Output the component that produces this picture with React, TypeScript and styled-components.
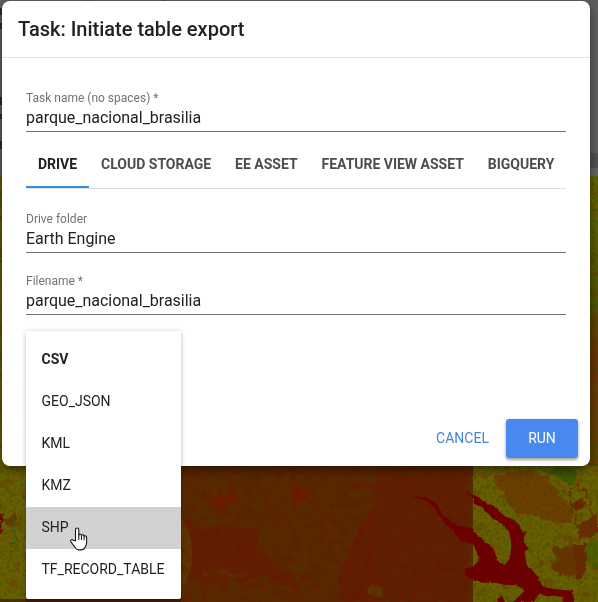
import React from "react";
import styled, { createGlobalStyle } from "styled-components";

const GlobalStyle = createGlobalStyle`
  *, *::before, *::after { box-sizing: border-box; }
  body { margin: 0; background: #5f5f5f; }
  body, button, input { font-family: Roboto, "Liberation Sans", sans-serif; }
`;

const Page = styled.main`
  position: relative;
  width: 598px;
  height: 602px;
  padding: 1px 8px 0 2px;
  overflow: hidden;
`;

const MapCanvas = styled.svg`
  position: absolute;
  inset: 0;
`;

const Dialog = styled.section`
  position: relative;
  display: flex;
  flex-direction: column;
  height: 465px;
  background: #fff;
  border-radius: 8px;
  box-shadow: 0 4px 10px rgba(0, 0, 0, 0.5);
  color: #212121;
`;

const Header = styled.header`
  height: 57px;
  padding: 0 16px;
  border-bottom: 1px solid #e0e0e0;
`;

const Title = styled.h1`
  margin: 0;
  font-size: 20px;
  font-weight: 500;
  line-height: 56px;
`;

const Content = styled.div`
  flex: 1;
  padding: 32px 24px 0;
`;

const Field = styled.label<{ $flush?: boolean }>`
  display: block;
  height: 42px;
  margin-bottom: ${(p) => (p.$flush ? "0" : "20px")};
  border-bottom: 1px solid #737373;
`;

const FieldLabel = styled.span`
  display: block;
  height: 16px;
  font-size: 12px;
  line-height: 16px;
  color: #737373;
`;

const FieldInput = styled.input`
  display: block;
  width: 100%;
  height: 24px;
  padding: 0;
  border: 0;
  outline: 0;
  background: transparent;
  font-size: 16px;
  line-height: 24px;
  letter-spacing: -0.02px;
  color: #212121;
`;

const Tabs = styled.nav`
  display: flex;
  height: 48px;
  margin: 9px 0 22px;
  border-bottom: 1px solid #dedede;
`;

const Tab = styled.button<{ $active?: boolean }>`
  position: relative;
  height: 48px;
  padding: 0 12px 1px;
  border: 0;
  background: none;
  font-size: 14px;
  font-weight: 700;
  line-height: 47px;
  letter-spacing: -0.015px;
  white-space: nowrap;
  color: ${(p) => (p.$active ? "#212121" : "#4d4d4d")};

  &::after {
    content: "";
    position: absolute;
    left: 0;
    right: 0;
    bottom: 1px;
    height: 2px;
    background: ${(p) => (p.$active ? "#3090e0" : "transparent")};
  }
`;

const Actions = styled.footer`
  display: flex;
  justify-content: flex-end;
  gap: 5px;
  padding: 0 12px 8px;
`;

const Button = styled.button<{ $primary?: boolean }>`
  height: 39px;
  width: ${(p) => (p.$primary ? "72px" : "77px")};
  padding: 0 0 1px;
  border: 0;
  border-radius: 3px;
  background: ${(p) => (p.$primary ? "#4889f0" : "transparent")};
  color: ${(p) => (p.$primary ? "#fff" : "#4384dc")};
  box-shadow: ${(p) => (p.$primary ? "0 2px 3px rgba(0,0,0,.32), 0 1px 4px rgba(0,0,0,.12)" : "none")};
  font-size: 14px;
  font-weight: 400;
`;

const Menu = styled.ul`
  position: absolute;
  left: 26px;
  top: 331px;
  width: 155px;
  margin: 0;
  padding: 8px 0;
  list-style: none;
  background: #fff;
  border-radius: 2px;
  box-shadow: 0 1px 5px rgba(0, 0, 0, 0.27);
`;

const Option = styled.li<{ $selected?: boolean; $hovered?: boolean }>`
  height: 42px;
  padding-left: 15.5px;
  font-size: 14px;
  line-height: 41px;
  color: #212121;
  font-weight: ${(p) => (p.$selected ? 700 : 400)};
  background: ${(p) => (p.$hovered ? "#d2d2d2" : "transparent")};
`;

const Pointer = styled.svg`
  position: absolute;
  left: 69px;
  top: 526px;
`;

const tabs = ["DRIVE", "CLOUD STORAGE", "EE ASSET", "FEATURE VIEW ASSET", "BIGQUERY"];
const formats = ["CSV", "GEO_JSON", "KML", "KMZ", "SHP", "TF_RECORD_TABLE"];

function SatelliteMap() {
  return (
    <MapCanvas width="598" height="602" viewBox="0 0 598 602" aria-hidden="true">
      <defs>
        <filter id="grain" x="0" y="0" width="100%" height="100%" colorInterpolationFilters="sRGB">
          <feTurbulence type="fractalNoise" baseFrequency=".3" numOctaves="3" seed="8" />
          <feColorMatrix values="0 0 0 0 .16  0 0 0 0 .3  0 0 0 0 0  2.5 0 0 0 -1.1" />
        </filter>
        <filter id="patches" x="0" y="0" width="100%" height="100%" colorInterpolationFilters="sRGB">
          <feTurbulence type="fractalNoise" baseFrequency=".09" numOctaves="4" seed="14" />
          <feColorMatrix values="0 0 0 0 .46  0 0 0 0 .18  0 0 0 0 0  0 4 0 0 -2.1" />
        </filter>
        <filter id="soil" x="0" y="0" width="100%" height="100%" colorInterpolationFilters="sRGB">
          <feTurbulence type="fractalNoise" baseFrequency=".11" numOctaves="4" seed="5" />
          <feColorMatrix values="0 0 0 0 .4  0 0 0 0 .07  0 0 0 0 0  0 2.5 0 0 -1.1" />
        </filter>
        <filter id="rough" x="-5%" y="-5%" width="110%" height="110%">
          <feTurbulence type="fractalNoise" baseFrequency=".15" numOctaves="3" result="n" />
          <feDisplacementMap in="SourceGraphic" in2="n" scale="8" xChannelSelector="R" yChannelSelector="G" />
        </filter>
        <filter id="shore" x="-5%" y="-5%" width="110%" height="110%" colorInterpolationFilters="sRGB">
          <feTurbulence type="fractalNoise" baseFrequency=".25" numOctaves="2" result="n" />
          <feDisplacementMap in="SourceGraphic" in2="n" scale="3" xChannelSelector="R" yChannelSelector="G" />
        </filter>
        <linearGradient id="eastEdge" x1="0" y1="176" x2="0" y2="466" gradientUnits="userSpaceOnUse">
          <stop offset="0" stopColor="#656800" />
          <stop offset=".45" stopColor="#555400" />
          <stop offset=".6" stopColor="#713000" />
          <stop offset="1" stopColor="#604600" />
        </linearGradient>
      </defs>
      <rect width="598" height="176" fill="#5f5f5f" />
      <path d="M590 153h8v15h-8z" fill="#515151" />
      <path d="M590 168h8v8h-8z" fill="#626262" />
      <path d="M88 0v2M164 0v2" stroke="#292929" />
      <path d="M0 8h2v7H0zM0 23h2v6H0zM0 97h2v8H0zM0 114h2v5H0zM0 141h2v8H0z" fill="#392039" />
      <rect y="176" width="598" height="426" fill="#6a5f00" />
      <rect x="590" y="176" width="8" height="290" fill="url(#eastEdge)" />
      <rect y="176" width="598" height="426" filter="url(#patches)" opacity=".45" />
      <g filter="url(#rough)">
        <g transform="translate(458 462) scale(.33333)">
          <path d="M105 50l45-18 60-14 55 30 45 50 32 45-2 35-55 5-60-25-35 5-40-35-12-35z" fill="#703c00" />
          <path d="M338 122l38-15 7 30-28 18z" fill="#702000" />
          <path d="M328 96l30-24 28 18 22 86-50 20z" fill="none" stroke="#702c00" strokeWidth="4" />
          <path d="M355 198l65-48v62l-55 25z" fill="#702c00" />
          <path d="M282 260l62-10 38 0 5 42-16 62-24-12-40-2-32-22 20-25z" fill="#6b3300" />
          <path d="M348 246h35l5 50-18 55-18-10z" fill="#6d2600" />
          <path d="M250 25l60-12 45 10 2 25-20 25-35-25z" fill="#355500" opacity=".8" />
          <path d="M386 245l34-12v85l-34-30z" fill="#485f00" opacity=".8" />
        </g>
        <path d="M0 513l3 3v11l-3 5zM0 527l5 3-1 4-4-1z" fill="#700600" />
        <path d="M3 522l13-11-1 17z" fill="#713000" />
        <path d="M6 542l10 1M13 513l3 39" stroke="#32600d" strokeWidth="1.5" />
      </g>
      <rect y="176" width="598" height="426" filter="url(#grain)" opacity=".55" />
      <path d="M26 466h447v136H26z" fill="#572900" />
      <g filter="url(#rough)">
        <path d="M181 515l19 15 17-5 40 5 3 49-44 4-35-4zM255 545l25 25 13 4 13 22-23-12-28-13zM375 468h94v134H336l7-36 15-38 20-28z" fill="#651a00" opacity=".75" />
        <path d="M208 503l11-9 17-2 2 8-15 12zM289 489l18-3 3 13-15 6z" fill="#681e00" />
        <path d="M302 526l28-4 25-4" fill="none" stroke="#651b00" strokeWidth="1.5" />
        <path d="M202 575l21-5 10 6 18-1" fill="none" stroke="#573408" strokeWidth="4" opacity=".7" />
        <path d="M366 591l5-7 10 1 2 10-9 5z" fill="#603000" />
      </g>
      <path d="M181 515q23 39 0 77z" fill="#5c3500" />
      <rect x="26" y="466" width="447" height="136" filter="url(#soil)" opacity=".48" />
      <rect x="375" y="466" width="98" height="136" filter="url(#grain)" opacity=".25" />
      <g filter="url(#shore)" fill="#6b0000">
        <path d="M410 497.5l15-.5 10 4 8 14 14 10 16 4v14l-12-2-7-9-12-12-8-13-10-7z" />
        <path
          transform="translate(458 462) scale(.33333)"
          d="M25 90L45 98 75 115 85 127 105 130 125 150 145 165 165 172 185 190 191 212 208 206 198 222 197 240 213 262 200 268 205 310 220 320 240 345 255 375 290 381 345 387 348 420H315V405L285 401 270 403 242 395 228 420H165L200 386 175 370 140 368 110 362 75 362 45 352 20 342 25 318 45 314 62 295 60 278 45 246 0 232V190L45 205 75 235 105 258 118 290 125 302 140 308 155 290 160 250 155 210 140 195 120 177 100 167 75 137 48 125 45 110Z"
        />
        <path d="M497 600l5-4 3 6h-7z" />
      </g>
      <path d="M0 599h181v3H0z" fill="#361300" opacity=".6" />
    </MapCanvas>
  );
}

function TextField({ label, value, flush }: { label: string; value: string; flush?: boolean }) {
  return (
    <Field $flush={flush}>
      <FieldLabel>{label}</FieldLabel>
      <FieldInput defaultValue={value} spellCheck={false} />
    </Field>
  );
}

export default function App() {
  return (
    <>
      <GlobalStyle />
      <Page>
        <SatelliteMap />
        <Dialog role="dialog" aria-label="Task: Initiate table export">
          <Header><Title>Task: Initiate table export</Title></Header>
          <Content>
            <TextField flush label="Task name (no spaces) *" value="parque_nacional_brasilia" />
            <Tabs>
              {tabs.map((name, i) => <Tab key={name} $active={i === 0}>{name}</Tab>)}
            </Tabs>
            <TextField label="Drive folder" value="Earth Engine" />
            <TextField label="Filename *" value="parque_nacional_brasilia" />
          </Content>
          <Actions><Button>CANCEL</Button><Button $primary>RUN</Button></Actions>
        </Dialog>
        <Menu role="listbox">
          {formats.map((name) => (
            <Option key={name} role="option" $selected={name === "CSV"} $hovered={name === "SHP"}>{name}</Option>
          ))}
        </Menu>
        <Pointer width="20" height="26" viewBox="0 0 20 26" aria-hidden="true">
          <path d="M6.5 15V3.8c0-2.5 3.3-2.5 3.3 0v5.1c.7-1.1 2.5-.8 2.7.4.8-.9 2.4-.5 2.6.7 1-.7 2.5.1 2.5 1.5v5.3c0 2-.9 3.2-1.6 4.7-.7 1.6-2 2.4-4.2 2.4H9.6c-1.6 0-2.4-.8-3.3-2.2L1.9 15.9c-1-1.7.8-3.1 2.3-1.7z" fill="#fff" stroke="#171717" strokeWidth="1.1" strokeLinejoin="round" />
          <path d="M9.8 8.9v4.5M12.5 9.5v4M15.1 10.3v3.4" stroke="#171717" strokeWidth="1.1" strokeLinecap="round" />
        </Pointer>
      </Page>
    </>
  );
}
